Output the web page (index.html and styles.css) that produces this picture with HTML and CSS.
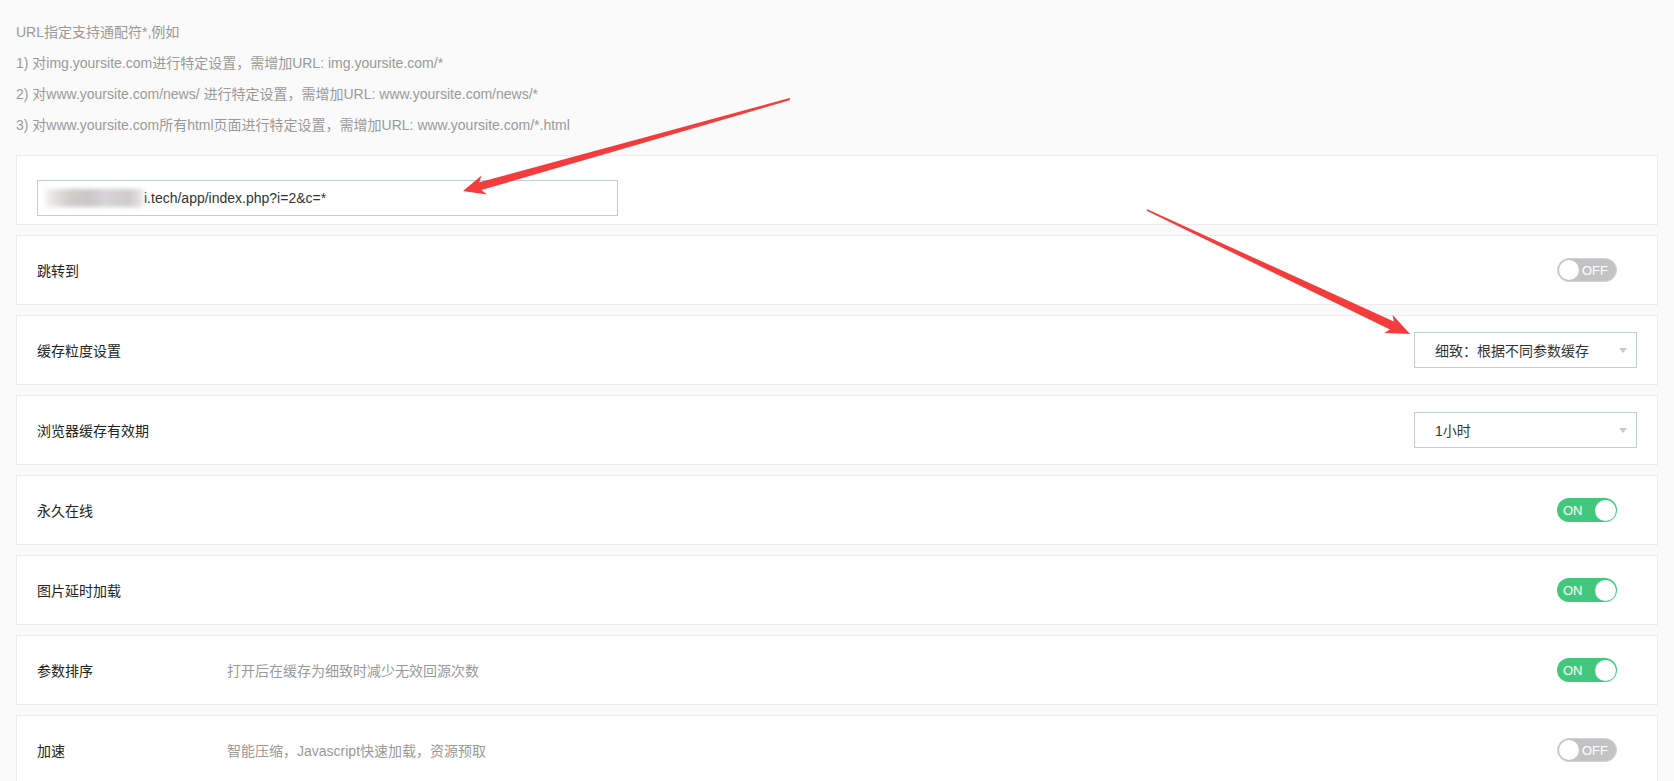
FILE: index.html
```html
<!DOCTYPE html>
<html lang="en">
<head>

    <!-- For styling -->
    <link rel="stylesheet" href="styles.css">

    <meta charset="UTF-8">
    <title>缓存设置</title>
</head>
<body>
    <div class="page">
        <div class="tips">
            <p>URL指定支持通配符*,例如</p>
            <p>1) 对img.yoursite.com进行特定设置，需增加URL: img.yoursite.com/*</p>
            <p>2) 对www.yoursite.com/news/ 进行特定设置，需增加URL: www.yoursite.com/news/*</p>
            <p>3) 对www.yoursite.com所有html页面进行特定设置，需增加URL: www.yoursite.com/*.html</p>
        </div>

        <div class="card card-url">
            <div class="url-box"><span class="blur"></span>i.tech/app/index.php?i=2&amp;c=*</div>
        </div>

        <div class="card">
            <span class="label">跳转到</span>
            <span class="switch off"><span class="knob"></span><span class="txt">OFF</span></span>
        </div>

        <div class="card">
            <span class="label">缓存粒度设置</span>
            <div class="select">细致：根据不同参数缓存<span class="caret"></span></div>
        </div>

        <div class="card">
            <span class="label">浏览器缓存有效期</span>
            <div class="select">1小时<span class="caret"></span></div>
        </div>

        <div class="card">
            <span class="label">永久在线</span>
            <span class="switch on"><span class="txt">ON</span><span class="knob"></span></span>
        </div>

        <div class="card">
            <span class="label">图片延时加载</span>
            <span class="switch on"><span class="txt">ON</span><span class="knob"></span></span>
        </div>

        <div class="card">
            <span class="label">参数排序</span>
            <span class="desc">打开后在缓存为细致时减少无效回源次数</span>
            <span class="switch on"><span class="txt">ON</span><span class="knob"></span></span>
        </div>

        <div class="card">
            <span class="label">加速</span>
            <span class="desc">智能压缩，Javascript快速加载，资源预取</span>
            <span class="switch off"><span class="knob"></span><span class="txt">OFF</span></span>
        </div>

        <!-- red note arrows drawn over the screenshot -->
        <svg class="marks" width="1674" height="781" viewBox="0 0 1674 781">
            <polygon fill="#f43c3c" points="463,191 481.5,175.4 479.2,182.3 789.7,98 790.3,100 481.4,190 486.9,194.6"/>
            <polygon fill="#f43c3c" points="1410,334 1392.5,314.7 1393.8,321.4 1147.3,209.3 1146.7,210.7 1390,329.6 1384.1,332.9"/>
        </svg>
    </div>
</body>
</html>
```

FILE: styles.css
```css
body {
    margin: 0;
    background: #fafafa;
    font-family: "Liberation Sans", "Noto Sans CJK SC", sans-serif;
    font-size: 14px;
    color: #222;
}

.page {
    position: relative;
    padding: 0 16px 0 16px;
    height: 781px;
    overflow: hidden;
}

.tips {
    padding-top: 17px;
    color: #999;
}
.tips p {
    margin: 0;
    line-height: 31px;
}

.card {
    display: flex;
    align-items: center;
    box-sizing: border-box;
    height: 70px;
    margin-bottom: 10px;
    padding: 0 20px;
    background: #fff;
    border: 1px solid #ececec;
}

.card-url {
    margin-top: 14px;
    align-items: flex-start;
    padding-top: 24px;
}

.url-box {
    display: flex;
    align-items: center;
    box-sizing: border-box;
    width: 581px;
    height: 36px;
    padding-left: 8px;
    border: 1px solid #c3ccd7;
    color: #333;
}

.blur {
    display: inline-block;
    width: 97px;
    height: 18px;
    margin-right: 1px;
    background: linear-gradient(90deg, #f3eeee 0%, #cfcccc 25%, #c8c6c6 45%, #d6d4d6 60%, #cdcbcb 85%, #e8e6e6 100%);
    filter: blur(2px);
}

.label {
    width: 190px;
    flex-shrink: 0;
}

.desc {
    color: #999;
}

.switch {
    display: flex;
    align-items: center;
    box-sizing: border-box;
    width: 60px;
    height: 24px;
    margin-left: auto;
    margin-right: 20px;
    border-radius: 12px;
    font-size: 13px;
    color: #fff;
}
.switch.on {
    background: #41c87d;
    justify-content: space-between;
    padding: 0 1px 0 6px;
}
.switch.off {
    background: #c3c3c3;
    border: 1px solid #d0d3d8;
    padding: 0;
}
.knob {
    width: 21px;
    height: 21px;
    border-radius: 50%;
    background: #fff;
}
.switch.off .knob {
    width: 20px;
    height: 20px;
    margin-left: 1px;
    margin-right: 3px;
}

.select {
    position: relative;
    display: flex;
    align-items: center;
    box-sizing: border-box;
    width: 223px;
    height: 36px;
    margin-left: auto;
    padding-left: 20px;
    border: 1px solid #c5ccd7;
    color: #333;
}
.caret {
    position: absolute;
    right: 9px;
    top: 15px;
    border-left: 4px solid transparent;
    border-right: 4px solid transparent;
    border-top: 5px solid #c6c9ce;
}

.marks {
    position: absolute;
    top: 0;
    left: 0;
    pointer-events: none;
}
```
